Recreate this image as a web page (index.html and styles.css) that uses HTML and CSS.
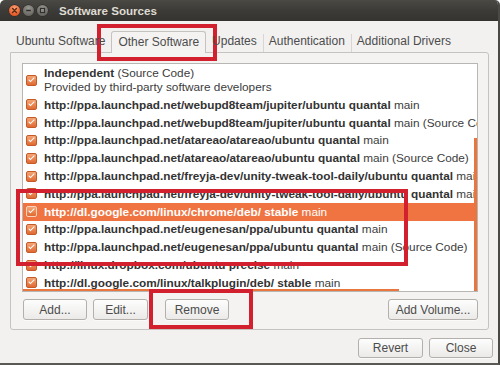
FILE: index.html
```html
<!DOCTYPE html>
<html lang="en">
<head>
  <meta charset="UTF-8">
  <meta name="viewport" content="width=device-width, initial-scale=1.0">
  <title>Software Sources</title>
  <link rel="stylesheet" href="styles.css">
</head>
<body>
  <div class="window">
    <!-- title bar -->
    <div class="titlebar">
      <div class="controls">
        <span class="wbtn close">
          <svg viewBox="0 0 11 11" width="11" height="11"><path d="M3.6 3.6 L7.4 7.4 M7.4 3.6 L3.6 7.4" stroke="#5a2a14" stroke-width="1.4" stroke-linecap="round"/></svg>
        </span>
        <span class="wbtn">
          <svg viewBox="0 0 11 11" width="11" height="11"><path d="M3.2 5.5 H7.8" stroke="#2e2d2a" stroke-width="1.4"/></svg>
        </span>
        <span class="wbtn">
          <svg viewBox="0 0 11 11" width="11" height="11"><rect x="3.4" y="3.4" width="4.2" height="4.2" fill="none" stroke="#2e2d2a" stroke-width="1.1"/></svg>
        </span>
      </div>
      <span class="title">Software Sources</span>
    </div>

    <div class="content">
      <div class="tabs">
        <div class="tab sep">Ubuntu Software</div>
        <div class="tab active">Other Software</div>
        <div class="tab sep">Updates</div>
        <div class="tab sep">Authentication</div>
        <div class="tab">Additional Drivers</div>
      </div>

      <div class="panel">
        <div class="list">
          <div class="source multi">
            <span class="chk"></span>
            <div class="label">
              <div><b>Independent</b> (Source Code)</div>
              <div>Provided by third-party software developers</div>
            </div>
          </div>
          <div class="source"><span class="chk"></span><span class="label"><b>http://ppa.launchpad.net/webupd8team/jupiter/ubuntu quantal</b> main</span></div>
          <div class="source"><span class="chk"></span><span class="label"><b>http://ppa.launchpad.net/webupd8team/jupiter/ubuntu quantal</b> main (Source Code)</span></div>
          <div class="source"><span class="chk"></span><span class="label"><b>http://ppa.launchpad.net/atareao/atareao/ubuntu quantal</b> main</span></div>
          <div class="source"><span class="chk"></span><span class="label"><b>http://ppa.launchpad.net/atareao/atareao/ubuntu quantal</b> main (Source Code)</span></div>
          <div class="source"><span class="chk"></span><span class="label"><b>http://ppa.launchpad.net/freyja-dev/unity-tweak-tool-daily/ubuntu quantal</b> main</span></div>
          <div class="source"><span class="chk"></span><span class="label"><b>http://ppa.launchpad.net/freyja-dev/unity-tweak-tool-daily/ubuntu quantal</b> main (Source Code)</span></div>
          <div class="source selected"><span class="chk"></span><span class="label"><b>http://dl.google.com/linux/chrome/deb/ stable</b> main</span></div>
          <div class="source"><span class="chk"></span><span class="label"><b>http://ppa.launchpad.net/eugenesan/ppa/ubuntu quantal</b> main</span></div>
          <div class="source"><span class="chk"></span><span class="label"><b>http://ppa.launchpad.net/eugenesan/ppa/ubuntu quantal</b> main (Source Code)</span></div>
          <div class="source"><span class="chk"></span><span class="label"><b>http://linux.dropbox.com/ubuntu precise</b> main</span></div>
          <div class="source"><span class="chk"></span><span class="label"><b>http://dl.google.com/linux/talkplugin/deb/ stable</b> main</span></div>
          <!-- overlay scrollbars -->
          <div class="vbar"></div>
          <div class="hbar"></div>
        </div>

        <div class="list-actions">
          <button class="btn btn-add">Add...</button>
          <button class="btn btn-edit">Edit...</button>
          <button class="btn btn-remove">Remove</button>
          <span class="spacer"></span>
          <button class="btn btn-volume">Add Volume...</button>
        </div>
      </div>

      <div class="dialog-actions">
        <button class="btn btn-revert">Revert</button>
        <button class="btn btn-close">Close</button>
      </div>
    </div>

    <!-- red annotation boxes -->
    <div class="mark mark-tab"></div>
    <div class="mark mark-rows"></div>
    <div class="mark mark-remove"></div>
  </div>
</body>
</html>
```

FILE: styles.css
```css
:root {
  --bg: #f2f1f0;
  --panel-bg: #f4f3f2;
  --border: #c5c3bf;
  --text: #3c3c3c;
  --orange: #ef7442;
  --mark: #d3202e;
}
*, *::before, *::after { box-sizing: border-box; }
body {
  margin: 0;
  background: #ffffff;
  font-family: "Liberation Sans", Arial, sans-serif;
  font-size: 12px;
  color: var(--text);
}
.window {
  position: relative;
  width: 500px;
  height: 365px;
  background: var(--bg);
  border-right: 2px solid #4a4945;
  border-bottom: 2px solid #5a5955;
  border-radius: 5px 5px 0 0;
  overflow: hidden;
  display: flex;
  flex-direction: column;
}

/* title bar */
.titlebar {
  height: 21px;
  flex: none;
  display: flex;
  align-items: center;
  padding-left: 9px;
  background: linear-gradient(#4a4944, #3c3b37 50%, #34332f);
}
.controls { display: flex; gap: 3px; width: 50px; }
.wbtn {
  width: 11px;
  height: 11px;
  border-radius: 50%;
  display: flex;
  background: radial-gradient(circle at 50% 30%, #9a9994, #6a6964 70%, #55544f);
  box-shadow: 0 0 0 0.5px #2a2926;
}
.wbtn.close { background: radial-gradient(circle at 50% 30%, #f9a27a, #e8602c 65%, #c9481a); }
.title {
  font-weight: bold;
  font-size: 11.6px;
  color: #dfdbd2;
}

/* notebook */
.content {
  flex: 1;
  display: flex;
  flex-direction: column;
  padding: 10px 9px 0 10px;
}
.tabs {
  display: flex;
  height: 21px;
  position: relative;
  z-index: 1;
}
.tab {
  position: relative;
  padding: 0 6px;
  line-height: 21px;
  color: #4c4c4c;
}
.tab.sep::after {
  content: "";
  position: absolute;
  right: -1px;
  top: 3px;
  bottom: 0;
  width: 1px;
  background: #d8d6d2;
}
.tab.active {
  height: 22px;
  line-height: 21px;
  border: 1px solid var(--border);
  border-bottom: none;
  border-radius: 3px 3px 0 0;
  background: var(--panel-bg);
}
.panel {
  width: 479px;
  border: 1px solid var(--border);
  border-radius: 0 3px 3px 3px;
  background: var(--panel-bg);
  padding: 10px 10px 9px 11px;
}

/* sources list */
.list {
  position: relative;
  height: 229px;
  background: #ffffff;
  border: 1px solid #b8b6b2;
  overflow: hidden;
  font-size: 11.8px;
}
.source {
  display: flex;
  align-items: center;
  gap: 7px;
  height: 17.8px;
  padding-left: 3px;
  white-space: nowrap;
}
.source.multi { height: 32px; line-height: 14px; }
.source b { color: #333333; }
.source.selected { background: var(--orange); color: #ffffff; }
.source.selected b { color: #ffffff; }
.chk {
  position: relative;
  flex: none;
  width: 11px;
  height: 11px;
  border: 1px solid #c45a27;
  border-radius: 2px;
  background: linear-gradient(#f5a475, #e06a32);
}
.chk::after {
  content: "";
  position: absolute;
  left: 3px;
  top: 0;
  width: 3px;
  height: 6px;
  border: solid #ffffff;
  border-width: 0 1.8px 1.8px 0;
  transform: rotate(45deg);
}
.source.selected .chk { border-color: #fbd2bd; }
.vbar {
  position: absolute;
  right: 0;
  top: 74px;
  bottom: 0;
  width: 3px;
  background: #e8763e;
}
.hbar {
  position: absolute;
  left: 0;
  bottom: 0;
  width: 376px;
  height: 2px;
  background: #e8763e;
}

/* buttons */
.btn {
  height: 21px;
  padding: 0;
  font: inherit;
  color: #4c4c4c;
  border: 1px solid #b3b0ab;
  border-radius: 3px;
  background: linear-gradient(#fdfdfd, #ebeae8);
  box-shadow: 0 1px 0 rgba(255,255,255,0.6);
}
.list-actions {
  display: flex;
  margin-top: 7px;
  padding-left: 1px;
}
.spacer { flex: 1; }
.btn-add { width: 64px; }
.btn-edit { width: 55px; margin-left: 6px; }
.btn-remove { width: 64px; margin-left: 17px; }
.btn-volume { width: 90px; }
.dialog-actions {
  display: flex;
  justify-content: flex-end;
  gap: 6px;
  margin: 8px -4px 0 0;
}
.dialog-actions .btn { height: 20px; }
.btn-revert { width: 65px; }
.btn-close { width: 64px; }

/* annotation boxes */
.mark {
  position: absolute;
  border: 4px solid var(--mark);
}
.mark-tab { left: 97px; top: 24px; width: 120px; height: 37px; }
.mark-rows { left: 16px; top: 189px; width: 392px; height: 77px; }
.mark-remove { left: 149px; top: 289px; width: 104px; height: 40px; }
```
